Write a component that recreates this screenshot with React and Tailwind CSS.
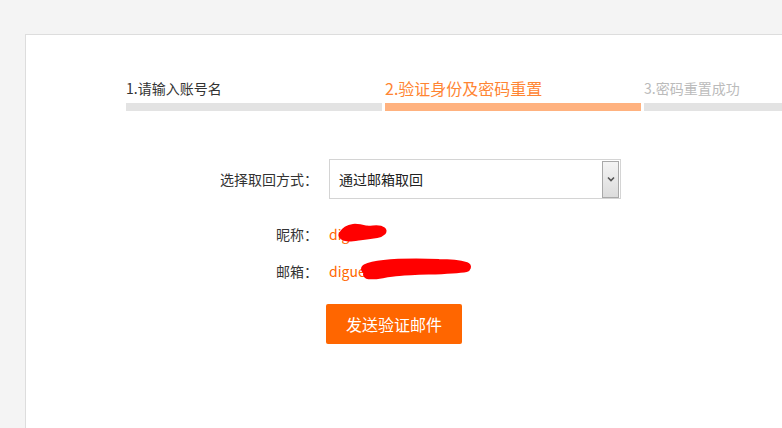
const steps = [
  { label: "1.请输入账号名", text: "text-[14px] text-[#333333]", bar: "bg-[#e3e3e3]" },
  { label: "2.验证身份及密码重置", text: "text-[16px] text-[#ff8533]", bar: "bg-[#ffb27f]" },
  { label: "3.密码重置成功", text: "text-[14px] text-[#bbbbbb]", bar: "bg-[#e3e3e3]" },
];

const Scribble = ({ className, d, width, height = 24, stroke = 9 }) => (
  <svg className={className} width={width} height={height} viewBox={`0 0 ${width} ${height}`}>
    <path d={d} fill="none" stroke="#ff0000" strokeWidth={stroke} strokeLinecap="round" strokeLinejoin="round" />
  </svg>
);

const App = () => {
  return (
    <div
      className="min-h-screen bg-[#f4f4f4] pt-[34px] pl-[25px] overflow-hidden"
      style={{ fontFamily: '"Noto Sans CJK SC", "Noto Sans", sans-serif' }}
    >
      <div className="bg-white border-t border-l border-[#dddddd] h-[394px] w-[1000px]">
        {/* steps */}
        <div className="flex items-end gap-[3px] pl-[100px] pt-[44px]">
          {steps.map((s) => (
            <div key={s.label} className="w-[256px] shrink-0 flex flex-col">
              <div className={`leading-[18px] whitespace-nowrap ${s.text}`}>{s.label}</div>
              <div className={`h-[8px] mt-[6px] ${s.bar}`} />
            </div>
          ))}
        </div>

        {/* form */}
        <div className="mt-[48px] text-[14px] text-[#333333]">
          <div className="flex items-center">
            <div className="w-[292px] text-right">选择取回方式：</div>
            <div className="ml-[11px] w-[292px] h-[40px] border border-[#d4d4d4] flex items-center justify-between pl-[9px] pr-[1px]">
              <span className="text-[14px] text-[#222222]">通过邮箱取回</span>
              <div className="w-[17px] h-[37px] border border-[#a9a9a9] bg-gradient-to-b from-[#f4f4f4] to-[#dcdcdc] flex items-center justify-center">
                <svg width="8" height="6" viewBox="0 0 8 6">
                  <path d="M1 1.5 L4 4.5 L7 1.5" fill="none" stroke="#555555" strokeWidth="1.6" />
                </svg>
              </div>
            </div>
          </div>

          <div className="mt-[17px] flex items-center h-[37px]">
            <div className="w-[292px] text-right">昵称：</div>
            <div className="ml-[11px] relative text-[14px] text-[#ff6600]">
              dig
              <Scribble
                className="absolute left-[9px] top-[-4px]"
                width={50}
                d="M5 15 C 10 6, 20 8, 28 10 C 34 11, 40 8, 44 11 C 40 15, 30 14, 20 16 C 14 17, 8 18, 5 15"
              />
            </div>
          </div>

          <div className="flex items-center h-[37px]">
            <div className="w-[292px] text-right">邮箱：</div>
            <div className="ml-[11px] relative text-[14px] text-[#ff6600]">
              digue
              <Scribble
                className="absolute left-[30px] top-[-4px]"
                width={114}
                height={26}
                stroke={10}
                d="M7 12 C 20 6, 50 6, 80 7 C 92 7, 100 8, 107 10 C 90 13, 60 12, 40 14 C 25 15, 14 19, 9 17"
              />
            </div>
          </div>

          <button
            type="button"
            className="mt-[14px] ml-[300px] w-[136px] h-[40px] bg-[#ff6600] rounded-[2px] text-white text-[16px]"
          >
            发送验证邮件
          </button>
        </div>
      </div>
    </div>
  );
};

export default App;
